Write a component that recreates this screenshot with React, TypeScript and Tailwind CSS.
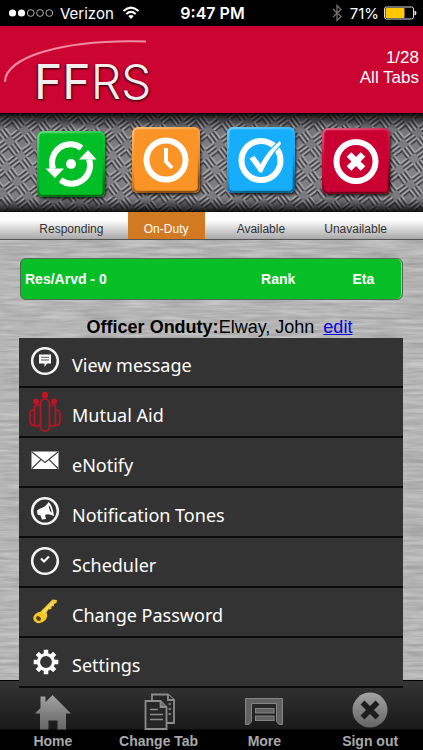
import type { ReactNode } from "react";

const WHITE = "#ffffff";

/* ---------- Textures ---------- */

function DiamondPlate() {
  return (
    <svg className="absolute inset-0 h-full w-full" aria-hidden="true">
      <defs>
        <linearGradient id="plateBase" x1="0" y1="0" x2="0" y2="1">
          <stop offset="0" stopColor="#737377" />
          <stop offset="0.5" stopColor="#8b8b90" />
          <stop offset="1" stopColor="#7c7c80" />
        </linearGradient>
        <linearGradient id="plateShade" x1="0" y1="0" x2="0" y2="1">
          <stop offset="0" stopColor="#000" stopOpacity="0.95" />
          <stop offset="0.04" stopColor="#000" stopOpacity="0.65" />
          <stop offset="0.16" stopColor="#000" stopOpacity="0.05" />
          <stop offset="0.86" stopColor="#000" stopOpacity="0.05" />
          <stop offset="0.96" stopColor="#000" stopOpacity="0.6" />
          <stop offset="1" stopColor="#000" stopOpacity="0.9" />
        </linearGradient>
        <g id="treads" strokeLinecap="round">
          <path d="M-6 0 L0 -6 M-3.500 3 L3 -3.500 M-.5 5.500 L6 -1" stroke="#37373b" strokeWidth="1.600" transform="translate(1 1.200)" />
          <path d="M-6 0 L0 -6 M-3.500 3 L3 -3.500 M-.5 5.500 L6 -1" stroke="#c0c0c5" strokeWidth="1.100" />
        </g>
        <pattern id="plate" width="26" height="26" patternUnits="userSpaceOnUse" patternTransform="rotate(8)">
          <use href="#treads" x="7" y="7" />
          <use href="#treads" x="20" y="20" />
          <use href="#treads" transform="translate(20 7) scale(-1 1)" />
          <use href="#treads" transform="translate(7 20) scale(-1 1)" />
        </pattern>
      </defs>
      <rect width="100%" height="100%" fill="url(#plateBase)" />
      <rect width="100%" height="100%" fill="url(#plate)" />
      <rect width="100%" height="100%" fill="url(#plateShade)" />
    </svg>
  );
}

function BrushedMetal() {
  return (
    <svg className="absolute inset-0 h-full w-full" aria-hidden="true">
      <filter id="brushed" x="0" y="0" width="100%" height="100%" colorInterpolationFilters="sRGB">
        <feTurbulence type="fractalNoise" baseFrequency="0.025 0.3" numOctaves="3" seed="4" />
        <feColorMatrix values="0.22 0 0 0 0.6  0.22 0 0 0 0.6  0.22 0 0 0 0.6  0 0 0 0 1" />
      </filter>
      <rect width="100%" height="100%" filter="url(#brushed)" />
    </svg>
  );
}

/* ---------- Status tiles ---------- */

function Tile({ color, top, children }: { color: string; top: number; children: ReactNode }) {
  return (
    <svg viewBox="0 0 76 80" className="h-20 w-[76px]" aria-hidden="true">
      <defs>
        <filter id="tileShadow" x="-10%" y="-10%" width="125%" height="125%">
          <feDropShadow dx="1" dy="2" stdDeviation="1.5" floodColor="#000" floodOpacity="0.75" />
        </filter>
        <filter id="tileSoft" x="-10%" y="-10%" width="120%" height="120%">
          <feGaussianBlur stdDeviation="0.7" />
        </filter>
        <linearGradient id="tileEdge" x1="0" y1="0" x2="0.3" y2="1">
          <stop offset="0" stopColor="#fff" stopOpacity="0.4" />
          <stop offset="0.4" stopColor="#fff" stopOpacity="0.05" />
          <stop offset="0.75" stopColor="#000" stopOpacity="0.1" />
          <stop offset="1" stopColor="#000" stopOpacity="0.45" />
        </linearGradient>
      </defs>
      <g transform={`translate(4 ${top})`}>
        <rect width="68" height="66" rx="6" fill={color} filter="url(#tileShadow)" />
        <rect x="1.200" y="1.200" width="65.600" height="63.600" rx="5" fill="none" stroke="url(#tileEdge)" strokeWidth="2.200" filter="url(#tileSoft)" />
        {children}
      </g>
    </svg>
  );
}

function RespondingTile() {
  return (
    <Tile color="#06bf27" top={6}>
      <g transform="translate(34 33)">
        <circle r="5" fill={WHITE} />
        <path d="M-18 5 A18.500 18.500 0 0 1 10.500 -16" fill="none" stroke={WHITE} strokeWidth="6" />
        <path d="M18 -5 A18.500 18.500 0 0 1 -10.500 16" fill="none" stroke={WHITE} strokeWidth="6" />
        <path d="M-25.500 4.500 H-7 L-16 14 Z M25.500 -4.500 H8 L17 -14 Z" fill={WHITE} />
      </g>
    </Tile>
  );
}

function OnDutyTile() {
  return (
    <Tile color="#fb9426" top={2}>
      <circle cx="34" cy="33" r="19.500" fill="none" stroke={WHITE} strokeWidth="6" />
      <path d="M34 21 V34.500 L40 41" fill="none" stroke={WHITE} strokeWidth="4" />
    </Tile>
  );
}

function AvailableTile() {
  return (
    <Tile color="#18aefb" top={2}>
      <circle cx="34" cy="33.500" r="19.500" fill="none" stroke={WHITE} strokeWidth="6" />
      <path d="M22.500 31.500 L27.500 29 L33.500 37 Q42 22 53 14 L54 17 Q43 28 35 45.500 H32.500 Z" fill={WHITE} stroke="#18aefb" strokeWidth="2" paintOrder="stroke" />
    </Tile>
  );
}

function UnavailableTile() {
  return (
    <Tile color="#cb0432" top={3}>
      <circle cx="34" cy="33.500" r="19.500" fill="none" stroke={WHITE} strokeWidth="6" />
      <path d="M27 26.500 L41 40.500 M41 26.500 L27 40.500" stroke={WHITE} strokeWidth="6.500" />
    </Tile>
  );
}

/* ---------- Menu icons ---------- */

function MenuIcon({ children }: { children: ReactNode }) {
  return (
    <svg viewBox="0 0 34 42" className="h-[42px] w-[34px] shrink-0" aria-hidden="true">
      {children}
    </svg>
  );
}

const Ring = () => <circle cx="17" cy="20" r="12.800" fill="none" stroke="#f4f4f4" strokeWidth="2.600" />;

const MessageIcon = () => (
  <MenuIcon>
    <Ring />
    <path d="M11 13.500 H23 V22.500 H19 L16.500 26 V22.500 H11 Z" fill="#fff" />
    <path d="M13 16.200 H21 M13 19 H21" stroke="#555" strokeWidth="1.100" />
  </MenuIcon>
);

const MutualAidIcon = () => (
  <MenuIcon>
    <g fill="none" stroke="#bd1323" strokeWidth="1.700">
      <rect x="12.500" y="8" width="9" height="32" rx="4.500" />
      <path d="M12 14 H9 Q6.500 14 6.500 16 V35 H9.500 Q12.500 35 12.500 31" />
      <path d="M22 14 H25 Q27.500 14 27.500 16 V35 H24.500 Q21.500 35 21.500 31" />
      <path d="M6.500 19 Q2 19 2 22.500 V30 Q2 34.500 6.500 34.500 M27.500 19 Q32 19 32 22.500 V30 Q32 34.500 27.500 34.500" />
    </g>
    <g fill="#bd1323">
      <circle cx="17" cy="4" r="3.200" />
      <circle cx="8" cy="10.500" r="3" />
      <circle cx="26" cy="10.500" r="3" />
    </g>
  </MenuIcon>
);

const MailIcon = () => (
  <MenuIcon>
    <rect x="3.500" y="10.500" width="27" height="17.500" fill="#fff" />
    <path d="M4 11 L17 21.500 L30 11 M4 27.500 L13 18.500 M30 27.500 L21 18.500" fill="none" stroke="#444" strokeWidth="1.200" />
  </MenuIcon>
);

const MegaphoneIcon = () => (
  <MenuIcon>
    <Ring />
    <path d="M9 19.500 L12 17.500 Q18 16 20.500 11 Q24.500 14 26 25 Q20 22 17 24 L18 28 L14 28.500 L12.500 24.500 L9.500 23.500 Z" fill="#fff" />
    <path d="M20.800 14 Q23 17 23.800 22 Q20.500 19 20.800 14Z" fill="#333" />
  </MenuIcon>
);

const ClockIcon = () => (
  <MenuIcon>
    <Ring />
    <path d="M13 17.500 L16 20.500 L21 15.500" fill="none" stroke="#fff" strokeWidth="2.200" />
  </MenuIcon>
);

const KeyIcon = () => (
  <MenuIcon>
    <path d="M12 21 L24.500 8.500 L29 9 L28.500 12 L26 13 V15 L23.500 15.500 V18 L20.500 18.500 L18.500 21.500 Q20.500 25 17.500 29 Q14 33 9 32 Q4.500 30 5.500 25.500 Q8 21 12 21 Z" fill="#f3c62b" />
    <path d="M15 22 L25 11" stroke="#fbe27a" strokeWidth="1.500" />
    <ellipse cx="10.500" cy="27.500" rx="2.700" ry="2" transform="rotate(35 10.500 27.500)" fill="#5b4510" />
  </MenuIcon>
);

const GearIcon = () => (
  <MenuIcon>
    <g transform="translate(18 21)">
      <circle r="7.500" fill="none" stroke="#fff" strokeWidth="3.200" />
      <path
        d="M0 -8 V-12.300 M0 8 V12.300 M-8 0 H-12.300 M8 0 H12.300 M5.700 -5.700 L8.700 -8.700 M-5.700 -5.700 L-8.700 -8.700 M5.700 5.700 L8.700 8.700 M-5.700 5.700 L-8.700 8.700"
        stroke="#fff"
        strokeWidth="4.500"
      />
    </g>
  </MenuIcon>
);

/* ---------- Tab bar icons ---------- */

function TabIcon({ children }: { children: ReactNode }) {
  return (
    <svg viewBox="0 0 40 40" className="size-10" aria-hidden="true">
      <defs>
        <linearGradient id="tabFill" x1="0" y1="0" x2="0" y2="1">
          <stop offset="0" stopColor="#a2a2a2" />
          <stop offset="1" stopColor="#656565" />
        </linearGradient>
      </defs>
      {children}
    </svg>
  );
}

const HomeIcon = () => (
  <TabIcon>
    <path d="M2 22.500 L7.500 17 V5.500 H12.500 V11 L19.500 4 L38 22.500 H33 V38.500 H24.500 V29.500 H15.500 V38.500 H7 V22.500 Z" fill="url(#tabFill)" />
  </TabIcon>
);

const PagesIcon = () => (
  <TabIcon>
    <g fill="#262626" stroke="#8c8c8c" strokeWidth="1.800">
      <path d="M13 3.500 H29 L35 9 V32 H13 Z" />
      <path d="M29 3.500 V9 H35" />
      <path d="M6.500 10 H21.500 L27.500 16 V38 H6.500 Z" />
      <path d="M21.500 10 V16 H27.500" fill="#666" />
      <path d="M11 18.500 H19 M11 23.500 H24 M11 28.500 H24 M29.500 13 H32 M29.500 18 H32 M29.500 23 H32" strokeWidth="1.500" />
    </g>
  </TabIcon>
);

const MoreIcon = () => (
  <TabIcon>
    <path d="M1.500 7.500 H38.500 V33.500 H35 L32.500 30.500 V12.500 H7.500 V30.500 L5 33.500 H1.500 Z" fill="#626262" stroke="#858585" />
    <rect x="11.500" y="17.500" width="18.500" height="4.500" fill="#626262" stroke="#858585" />
    <rect x="11.500" y="25" width="18.500" height="4.500" fill="#626262" stroke="#858585" />
  </TabIcon>
);

const SignOutIcon = () => (
  <TabIcon>
    <circle cx="20" cy="19" r="17.500" fill="url(#tabFill)" />
    <path d="M12.500 11.500 L27.500 26.500 M27.500 11.500 L12.500 26.500" stroke="#1c1c1c" strokeWidth="5.500" />
  </TabIcon>
);

/* ---------- Data ---------- */

const statuses = [
  { label: "Responding", Icon: RespondingTile, active: false },
  { label: "On-Duty", Icon: OnDutyTile, active: true },
  { label: "Available", Icon: AvailableTile, active: false },
  { label: "Unavailable", Icon: UnavailableTile, active: false },
];

const menuItems = [
  { label: "View message", Icon: MessageIcon },
  { label: "Mutual Aid", Icon: MutualAidIcon },
  { label: "eNotify", Icon: MailIcon },
  { label: "Notification Tones", Icon: MegaphoneIcon },
  { label: "Scheduler", Icon: ClockIcon },
  { label: "Change Password", Icon: KeyIcon },
  { label: "Settings", Icon: GearIcon },
];

const tabs = [
  { label: "Home", Icon: HomeIcon },
  { label: "Change Tab", Icon: PagesIcon },
  { label: "More", Icon: MoreIcon },
  { label: "Sign out", Icon: SignOutIcon },
];

/* ---------- Sections ---------- */

function StatusBar() {
  return (
    <div className="grid h-[26px] grid-cols-[1fr_auto_1fr] items-center bg-black pr-1.5 pl-2 font-['Inter',sans-serif] text-[16px] leading-none text-white">
      <div className="flex items-center gap-1.5">
        <svg viewBox="0 0 46 8" className="h-2 w-[46px]" aria-hidden="true">
          <circle cx="4.500" cy="4" r="3.600" fill="#fff" />
          <circle cx="13.500" cy="4" r="3.600" fill="#fff" />
          <g fill="none" stroke="#ddd" strokeWidth=".8">
            <circle cx="22.700" cy="4" r="3.400" />
            <circle cx="32" cy="4" r="3.400" />
            <circle cx="41.300" cy="4" r="3.400" />
          </g>
        </svg>
        <span className="text-[15px]">Verizon</span>
        <svg viewBox="0 0 18 14" className="ml-0.5 h-3.5 w-[18px]" aria-hidden="true">
          <g fill="none" stroke="#fff" strokeWidth="2">
            <path d="M1.500 5 Q9 -1.800 16.500 5" />
            <path d="M4.300 8 Q9 3.800 13.700 8" />
          </g>
          <path d="M6.300 10 Q9 7.800 11.700 10 L9 13 Z" fill="#fff" />
        </svg>
      </div>
      <span className="font-semibold">9:47 PM</span>
      <div className="flex items-center justify-end gap-1">
        <svg viewBox="0 0 10 18" className="mr-1 h-[18px] w-2.5" aria-hidden="true">
          <path d="M1 5 L9 12.500 L5 16.500 V1.500 L9 5.500 L1 13" fill="none" stroke="#777" strokeWidth="1.200" />
        </svg>
        <span className="text-[15px]">71%</span>
        <svg viewBox="0 0 34 14" className="h-3.5 w-[34px]" aria-hidden="true">
          <rect x="1.500" y="1" width="29" height="12" rx="2" fill="none" stroke="#ddd" />
          <rect x="2.500" y="2" width="19" height="10" rx="1" fill="#fdc800" />
          <path d="M31.500 4.500 Q33.500 5 33.500 7 Q33.500 9 31.500 9.500 Z" fill="#eee" />
        </svg>
      </div>
    </div>
  );
}

function Header() {
  return (
    <header className="relative flex h-[87px] justify-between bg-[#cb0432] pr-1 pl-[34px] text-white">
      <svg viewBox="0 0 150 50" className="absolute top-3 left-0 h-[50px] w-[150px]" aria-hidden="true">
        <path d="M5 44 C5 20 60 1 146 3.500" fill="none" stroke="#f18aa3" strokeWidth="2" />
      </svg>
      <h1 className="relative flex items-end pb-1 font-['Inter',sans-serif] text-[48px] leading-[54px] text-[#f2eeee] [text-shadow:1px_1px_2px_#4a0010,-1px_1px_2px_#4a0010]">
        <span className="font-normal">FF</span>
        <span className="font-light">RS</span>
      </h1>
      <p className="pt-[22px] text-right text-[17px] leading-5">
        1/28
        <br />
        All Tabs
      </p>
    </header>
  );
}

function StatusPicker() {
  return (
    <section aria-label="Status">
      <div className="relative h-[99px] bg-[#77777b]">
        <DiamondPlate />
        <div className="relative grid grid-cols-4 justify-items-center pt-3 pr-5 pl-6">
          {statuses.map(({ label, Icon }) => (
            <button key={label} type="button" aria-label={label}>
              <Icon />
            </button>
          ))}
        </div>
      </div>
      <div className="grid h-7 grid-cols-4 justify-items-center border-b border-[#555] bg-linear-to-b from-white from-30% to-[#a9a9a9] pr-5 pl-6 text-[12px] leading-5 text-[#333]">
        {statuses.map(({ label, active }) => (
          <span key={label} className={active ? "w-[77px] bg-[#d27a22] pt-[7px] text-center text-white" : "pt-[7px]"}>
            {label}
          </span>
        ))}
      </div>
    </section>
  );
}

function OptionsMenu() {
  return (
    <nav aria-label="Options" className="relative z-10 mr-5 ml-[19px]">
      <ul className="bg-[#333]">
        {menuItems.map(({ label, Icon }) => (
          <li key={label} className="border-b-2 border-[#0c0c0c]">
            <button type="button" className="flex h-12 w-full items-center gap-2.5 pl-[9px] text-left font-['Noto_Sans',sans-serif] text-[18px] text-white">
              <Icon />
              <span className="pt-1.5">{label}</span>
            </button>
          </li>
        ))}
      </ul>
    </nav>
  );
}

function TabBar() {
  return (
    <footer className="relative -mt-2 grid grow grid-cols-4 border-t border-black bg-[linear-gradient(to_bottom,#343434_0,#1a1a1a_48px,#000_49px)] pt-2.5">
      {tabs.map(({ label, Icon }) => (
        <button key={label} type="button" className="flex flex-col items-center text-[14px] leading-5 font-bold text-[#a9a9a9]">
          <Icon />
          {label}
        </button>
      ))}
    </footer>
  );
}

export default function App() {
  return (
    <div className="flex min-h-screen flex-col bg-black font-['Liberation_Sans',Arial,sans-serif]">
      <StatusBar />
      <Header />
      <StatusPicker />
      <main className="relative pt-[18px]">
        <BrushedMetal />
        <div className="relative mx-5 rounded-md border border-[#4c6b50] bg-[#06bf27] shadow-[inset_-1px_0_0_#7fe08f]">
          <table className="w-full table-fixed text-left text-[14px] text-white">
            <thead>
              <tr className="h-10">
                <th className="w-[63%] pl-1">Res/Arvd - 0</th>
                <th className="w-[24%]">Rank</th>
                <th>Eta</th>
              </tr>
            </thead>
          </table>
        </div>
        <p className="relative pt-4 pl-4 text-center text-[18px] leading-[22px] text-black">
          <b>Officer Onduty:</b>Elway, John{" "}
          <a href="#edit" className="ml-1 text-[#0a00e0] underline">
            edit
          </a>
        </p>
        <OptionsMenu />
      </main>
      <TabBar />
    </div>
  );
}
